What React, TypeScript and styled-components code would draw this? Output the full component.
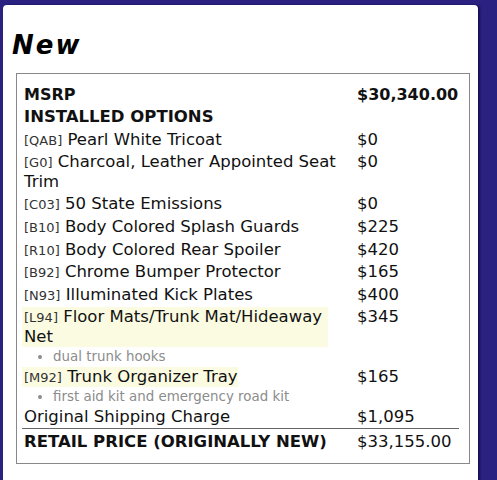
import React from "react";
import styled, { createGlobalStyle } from "styled-components";

const Global = createGlobalStyle`
  html, body { margin: 0; padding: 0; }
  body {
    background: #2a2181;
    font-family: "DejaVu Sans", Verdana, sans-serif;
    color: #111;
    height: 480px;
    overflow: hidden;
  }
`;

const Card = styled.div`
  margin: 5px 0 0 3px;
  width: 475px;
  height: 480px;
  background: #fff;
  border-radius: 4px 4px 0 0;
  padding: 22px 0 0 0;
  box-sizing: border-box;
  box-shadow: 2px 0 2px rgba(10, 5, 60, 0.6);
`;

const Title = styled.h1`
  margin: 0 0 10px 9px;
  font-size: 26px;
  line-height: 36px;
  letter-spacing: 2px;
  font-weight: bold;
  font-style: italic;
  color: #000;
`;

const Box = styled.div`
  margin-left: 13px;
  width: 454px;
  box-sizing: border-box;
  border: 1px solid #888;
  padding: 9px 0 10px 5px;
`;

const Table = styled.table`
  border-collapse: collapse;
  border-spacing: 0;
  font-size: 16.5px;
`;

const Row = styled.tr<{ $total?: boolean }>`
  border-top: ${(p) => (p.$total ? "1px solid #666" : "none")};
  & > td {
    padding-top: ${(p) => (p.$total ? "3px" : undefined)};
  }
`;

const Desc = styled.td<{ $bold?: boolean; $size?: number }>`
  width: 326px;
  padding: 1.5px 7px 1.5px 2px;
  vertical-align: top;
  line-height: 19.6px;
  font-size: ${(p) => (p.$size ? `${p.$size}px` : "inherit")};
  font-weight: ${(p) => (p.$bold ? "bold" : "normal")};
  text-transform: ${(p) => (p.$bold ? "uppercase" : "none")};
`;

const Price = styled.td<{ $bold?: boolean; $size?: number }>`
  width: 102px;
  padding: 1.5px 0;
  vertical-align: top;
  line-height: 19.6px;
  font-size: ${(p) => (p.$size ? `${p.$size}px` : "inherit")};
  font-weight: ${(p) => (p.$bold ? "bold" : "normal")};
`;

const NoteCell = styled.td`
  padding: 1px 0;
  font-size: 13.4px;
  line-height: 15.4px;
  color: #8c8c8c;
`;

const Notes = styled.ul`
  margin: 0;
  padding-left: 31px;
  list-style: disc;
`;

const Item = styled.span<{ $hl?: boolean }>`
  display: ${(p) => (p.$hl ? "inline-block" : "inline")};
  max-width: 304px;
  background: ${(p) => (p.$hl ? "#fbfbe2" : "transparent")};
  margin-left: ${(p) => (p.$hl ? "-2px" : "0")};
  padding-left: ${(p) => (p.$hl ? "2px" : "0")};
`;

const Code = styled.span`
  font-size: 13px;
  line-height: 1;
  color: #333;
`;

type Opt = { code: string; name: string; price: string; note?: string; hl?: boolean };

const options: Opt[] = [
  { code: "QAB", name: "Pearl White Tricoat", price: "$0" },
  { code: "G0", name: "Charcoal, Leather Appointed Seat Trim", price: "$0" },
  { code: "C03", name: "50 State Emissions", price: "$0" },
  { code: "B10", name: "Body Colored Splash Guards", price: "$225" },
  { code: "R10", name: "Body Colored Rear Spoiler", price: "$420" },
  { code: "B92", name: "Chrome Bumper Protector", price: "$165" },
  { code: "N93", name: "Illuminated Kick Plates", price: "$400" },
  { code: "L94", name: "Floor Mats/Trunk Mat/Hideaway Net", price: "$345", note: "dual trunk hooks", hl: true },
  { code: "M92", name: "Trunk Organizer Tray", price: "$165", note: "first aid kit and emergency road kit", hl: true },
];

export default function App() {
  return (
    <>
      <Global />
      <Card>
        <Title>New</Title>
        <Box>
          <Table>
            <tbody>
              <Row>
                <Desc $bold $size={16}>MSRP</Desc>
                <Price $bold $size={16}>$30,340.00</Price>
              </Row>
              <Row>
                <Desc $bold>Installed Options</Desc>
                <Price />
              </Row>
              {options.map((o) => (
                <React.Fragment key={o.code}>
                  <Row>
                    <Desc>
                      <Item $hl={o.hl}>
                        <Code>[{o.code}]</Code> {o.name}
                      </Item>
                    </Desc>
                    <Price>{o.price}</Price>
                  </Row>
                  {o.note && (
                    <Row>
                      <NoteCell colSpan={2}>
                        <Notes>
                          <li>{o.note}</li>
                        </Notes>
                      </NoteCell>
                    </Row>
                  )}
                </React.Fragment>
              ))}
              <Row>
                <Desc>Original Shipping Charge</Desc>
                <Price>$1,095</Price>
              </Row>
              <Row $total>
                <Desc $bold>Retail Price (Originally New)</Desc>
                <Price>$33,155.00</Price>
              </Row>
            </tbody>
          </Table>
        </Box>
      </Card>
    </>
  );
}
